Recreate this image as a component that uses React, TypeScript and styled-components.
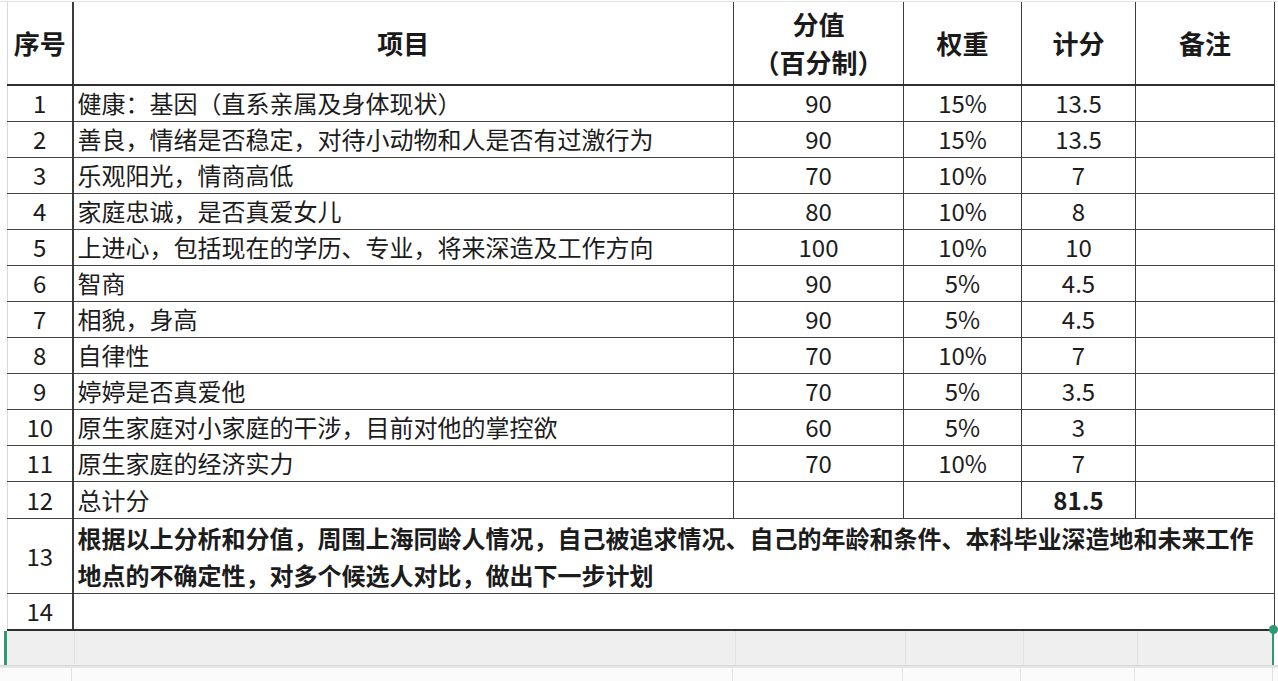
import { FC } from 'react'
import styled, { createGlobalStyle } from 'styled-components'

const GlobalStyle = createGlobalStyle`
  html, body {
    margin: 0;
    padding: 0;
    background: #ffffff;
  }
  body {
    font-family: "Noto Sans CJK SC", "Noto Sans", sans-serif;
    color: #1c1c1c;
    overflow: hidden;
  }
`

const Sheet = styled.div`
  width: 1278px;
  height: 681px;
  position: relative;
  overflow: hidden;
  background: #ffffff;
  padding: 2px 0 0 7px;
  box-sizing: border-box;
`

const TopGrid = styled.div`
  position: absolute;
  left: 0;
  right: 0;
  top: 1px;
  height: 1px;
  background: #e4e4e4;
`

const Table = styled.table`
  border-collapse: collapse;
  table-layout: fixed;
  width: 1267px;
  border-left: 1px solid #d8d8d8;
`

const Col = styled.col<{ $w: number }>`
  width: ${p => p.$w}px;
`

const HeadCell = styled.th`
  height: 82px;
  padding: 0;
  font-size: 26px;
  font-weight: 700;
  line-height: 38px;
  color: #1a1a1a;
  text-align: center;
  vertical-align: middle;
  border-right: 1.5px solid #3c3c3c;
  border-bottom: 2.5px solid #2e2e2e;
  &:first-child { border-right-width: 2px; }
`

const Row = styled.tr<{ $h?: number }>`
  height: ${p => p.$h ?? 36}px;
`

const Cell = styled.td<{ $align?: 'left' | 'center'; $bold?: boolean; $num?: boolean }>`
  height: inherit;
  box-sizing: border-box;
  padding: 0 0 0 ${p => (p.$align === 'left' ? '4px' : '0')};
  text-align: ${p => p.$align ?? 'center'};
  vertical-align: middle;
  font-size: 24px;
  font-weight: ${p => (p.$bold ? 700 : 400)};
  line-height: 26px;
  color: #1c1c1c;
  border-right: 1.5px solid #3c3c3c;
  border-bottom: 1.5px solid #444444;
  white-space: nowrap;
  overflow: hidden;
  &:first-child { border-right-width: 2px; }
`

const WrapCell = styled(Cell)`
  white-space: normal;
  line-height: 37px;
  padding-right: 6px;
`

const LastRowCell = styled(Cell)`
  border-bottom: 2.5px solid #2e2e2e;
`

const SelectedRow = styled.div`
  height: 34px;
  margin-left: -3px;
  width: 1270px;
  display: grid;
  grid-template-columns: 68px 661px 170px 118px 114px 138px;
  background: #efefef;
  border-left: 3px solid #2d9a74;
  border-right: 2px solid #2d9a74;
  position: relative;
  box-sizing: border-box;
`

const GhostCell = styled.div`
  border-right: 1px solid #e2e2e2;
`

const Handle = styled.span`
  position: absolute;
  right: -6px;
  top: -6px;
  width: 9px;
  height: 9px;
  border-radius: 50%;
  background: #2d9a74;
`

const Shadow = styled.div`
  height: 3px;
  margin-left: -7px;
  width: 1278px;
  background: linear-gradient(#d6d6d6, #ececec);
`

const EmptyRow = styled.div`
  height: 30px;
  margin-left: -7px;
  width: 1278px;
  display: grid;
  grid-template-columns: 72px 661px 170px 118px 114px 138px 5px;
  background: #fbfbfb;
`

type Item = [string, string, string, string, string]

const items: Item[] = [
  ['1', '健康：基因（直系亲属及身体现状）', '90', '15%', '13.5'],
  ['2', '善良，情绪是否稳定，对待小动物和人是否有过激行为', '90', '15%', '13.5'],
  ['3', '乐观阳光，情商高低', '70', '10%', '7'],
  ['4', '家庭忠诚，是否真爱女儿', '80', '10%', '8'],
  ['5', '上进心，包括现在的学历、专业，将来深造及工作方向', '100', '10%', '10'],
  ['6', '智商', '90', '5%', '4.5'],
  ['7', '相貌，身高', '90', '5%', '4.5'],
  ['8', '自律性', '70', '10%', '7'],
  ['9', '婷婷是否真爱他', '70', '5%', '3.5'],
  ['10', '原生家庭对小家庭的干涉，目前对他的掌控欲', '60', '5%', '3'],
  ['11', '原生家庭的经济实力', '70', '10%', '7'],
]

const widths = [65, 661, 170, 118, 114, 139]

const App: FC = () => {
  return (
    <>
      <GlobalStyle />
      <Sheet>
        <TopGrid />
        <Table>
          <colgroup>
            {widths.map((w, i) => <Col key={i} $w={w} />)}
          </colgroup>
          <thead>
            <tr>
              <HeadCell>序号</HeadCell>
              <HeadCell>项目</HeadCell>
              <HeadCell>分值<br />（百分制）</HeadCell>
              <HeadCell>权重</HeadCell>
              <HeadCell>计分</HeadCell>
              <HeadCell>备注</HeadCell>
            </tr>
          </thead>
          <tbody>
            {items.map(([n, name, score, weight, total]) => (
              <Row key={n}>
                <Cell $num>{n}</Cell>
                <Cell $align="left">{name}</Cell>
                <Cell $num>{score}</Cell>
                <Cell $num>{weight}</Cell>
                <Cell $num>{total}</Cell>
                <Cell />
              </Row>
            ))}
            <Row $h={37}>
              <Cell $num>12</Cell>
              <Cell $align="left">总计分</Cell>
              <Cell />
              <Cell />
              <Cell $num $bold>81.5</Cell>
              <Cell />
            </Row>
            <Row $h={73}>
              <Cell $num>13</Cell>
              <WrapCell $align="left" $bold colSpan={5}>
                根据以上分析和分值，周围上海同龄人情况，自己被追求情况、自己的年龄和条件、本科毕业深造地和未来工作地点的不确定性，对多个候选人对比，做出下一步计划
              </WrapCell>
            </Row>
            <Row $h={37}>
              <LastRowCell $num>14</LastRowCell>
              <LastRowCell colSpan={5} />
            </Row>
          </tbody>
        </Table>
        <SelectedRow>
          <GhostCell />
          <GhostCell />
          <GhostCell />
          <GhostCell />
          <GhostCell />
          <div />
          <Handle />
        </SelectedRow>
        <Shadow />
        <EmptyRow>
          <GhostCell />
          <GhostCell />
          <GhostCell />
          <GhostCell />
          <GhostCell />
          <GhostCell />
          <div />
        </EmptyRow>
      </Sheet>
    </>
  )
}

export default App
